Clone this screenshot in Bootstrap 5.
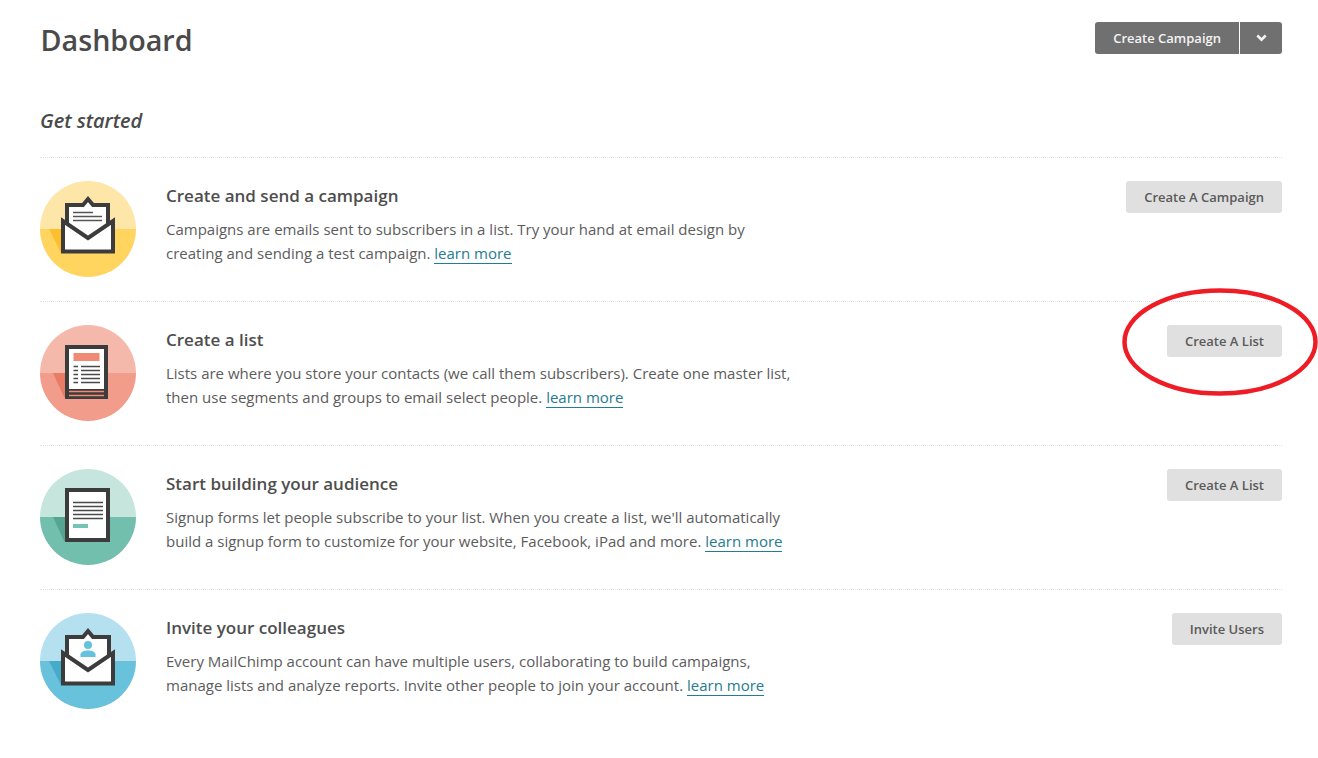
<!DOCTYPE html>
<html lang="en">
<head>
<meta charset="utf-8">
<title>Dashboard</title>
<link rel="stylesheet" href="https://cdn.jsdelivr.net/npm/bootstrap@5.3.0/dist/css/bootstrap.min.css">
<style>
body{font-family:"Open Sans",sans-serif;color:#555;background:#fff;font-size:15px;line-height:24px}
.page-wrap{padding:0 36px 0 40px;position:relative}
.top-bar{height:80px;padding-top:22px}
.page-title{font-size:28.7px;line-height:36px;font-weight:600;color:#4a4a4a;margin:0 0 0 .5px;letter-spacing:0}
.split-btn{height:32px}
.btn-dark-grey{background:#707070;color:#f4f4f4;font-size:13px;font-weight:600;line-height:32px;height:32px;padding:0 18px;border:0;border-radius:3px 0 0 3px}
.btn-caret{background:#707070;height:32px;width:43px;border:0;border-left:1px solid #fff;border-radius:0 3px 3px 0;padding:0}
.btn-caret svg{display:block;margin:0 auto}
.started{font-size:20px;font-weight:600;font-style:italic;color:#4a4a4a;line-height:28px;margin:0;padding-top:27px;height:77px;letter-spacing:-.05px}
.task-row{border-top:1px dotted #e2e2e2;height:144px;padding-top:23px}
.task-ico{width:96px;height:96px;flex:none;margin-right:30px}
.task-ico svg{display:block}
.task-text{width:630px;padding-top:3px}
.task-title{font-size:17px;font-weight:600;color:#4e4e4e;line-height:24px;margin:0 0 9px}
.task-desc{margin:0;color:#5c5c5c}
.task-desc a{color:#257b8f;text-decoration:none;border-bottom:1px solid #257b8f}
.btn-light-grey{background:#e0e0e0;color:#5a5a5a;font-size:13px;font-weight:600;height:32px;line-height:32px;padding:0 18px;border:0;border-radius:3px}
.red-ring{position:absolute;left:1122px;top:288px;pointer-events:none}
</style>
</head>
<body>
<div class="page-wrap">
  <div class="top-bar d-flex justify-content-between align-items-start">
    <h1 class="page-title">Dashboard</h1>
    <div class="split-btn d-flex">
      <button class="btn-dark-grey" type="button">Create Campaign</button>
      <button class="btn-caret" type="button" aria-label="More"><svg width="11" height="8" viewBox="0 0 11 8"><path d="M1.300 1.500 5.500 5.700 9.700 1.500" fill="none" stroke="#f4f4f4" stroke-width="2.500"/></svg></button>
    </div>
  </div>
  <h2 class="started">Get started</h2>

  <div class="task-row d-flex align-items-start">
    <div class="task-ico">
      <svg width="96" height="96" viewBox="0 0 96 96">
        <defs><clipPath id="c1"><circle cx="48" cy="48" r="48"/></clipPath></defs>
        <g clip-path="url(#c1)">
          <rect width="96" height="48" fill="#fee6a9"/><rect y="48" width="96" height="48" fill="#ffd45f"/>
          <path d="M9 48H24V72H21Z" fill="#fcc02f"/>
        </g>
        <path d="M27 44V24H43L48 18L53 24H68V44L48 57Z" fill="#fff"/>
        <path d="M27 44V24H43L48 18L53 24H68V44" fill="none" stroke="#3c3c3c" stroke-width="4"/>
        <path d="M33 31.500H53M33 35.500H62M33 39.500H62" stroke="#555" stroke-width="1.300"/>
        <path d="M23 40V70.500H73V40L48 57Z" fill="#fff" stroke="#3c3c3c" stroke-width="4"/>
      </svg>
    </div>
    <div class="task-text">
      <h3 class="task-title">Create and send a campaign</h3>
      <p class="task-desc">Campaigns are emails sent to subscribers in a list. Try your hand at email design by creating and sending a test campaign. <a href="#">learn more</a></p>
    </div>
    <button class="btn-light-grey ms-auto" type="button">Create A Campaign</button>
  </div>

  <div class="task-row d-flex align-items-start">
    <div class="task-ico">
      <svg width="96" height="96" viewBox="0 0 96 96">
        <defs><clipPath id="c2"><circle cx="48" cy="48" r="48"/></clipPath></defs>
        <g clip-path="url(#c2)">
          <rect width="96" height="48" fill="#f5b9ab"/><rect y="48" width="96" height="48" fill="#f29c8c"/>
          <path d="M13 48H27V72H24Z" fill="#e97c64"/>
        </g>
        <rect x="25" y="20" width="43" height="54" fill="#3c3c3c"/>
        <rect x="29" y="24" width="35" height="40" fill="#fff"/>
        <rect x="33.500" y="28" width="26" height="8" fill="#f08a75"/>
        <path d="M33.500 41.500H38M41 41.500H60M33.500 45.500H38M41 45.500H60M33.500 49.500H38M41 49.500H60M33.500 53.500H38M41 53.500H60M33.500 57.500H38M41 57.500H60" stroke="#4a4a4a" stroke-width="1.600"/>
        <path d="M29 66.500H64M29 70.500H64" stroke="#f08a75" stroke-width="1.500"/>
      </svg>
    </div>
    <div class="task-text">
      <h3 class="task-title">Create a list</h3>
      <p class="task-desc">Lists are where you store your contacts (we call them subscribers). Create one master list, then use segments and groups to email select people. <a href="#">learn more</a></p>
    </div>
    <button class="btn-light-grey ms-auto" type="button">Create A List</button>
  </div>

  <div class="task-row d-flex align-items-start">
    <div class="task-ico">
      <svg width="96" height="96" viewBox="0 0 96 96">
        <defs><clipPath id="c3"><circle cx="48" cy="48" r="48"/></clipPath></defs>
        <g clip-path="url(#c3)">
          <rect width="96" height="48" fill="#c6e5dd"/><rect y="48" width="96" height="48" fill="#73bfae"/>
          <path d="M13 48H27V72H24Z" fill="#55a591"/>
        </g>
        <rect x="27" y="21" width="41" height="50" fill="#fff" stroke="#3c3c3c" stroke-width="4"/>
        <path d="M33 33.500H63M33 37.500H63M33 41.500H63M33 45.500H63M33 49.500H63" stroke="#4a4a4a" stroke-width="1.600"/>
        <rect x="33" y="55" width="15" height="4" fill="#73c4b2"/>
      </svg>
    </div>
    <div class="task-text">
      <h3 class="task-title">Start building your audience</h3>
      <p class="task-desc">Signup forms let people subscribe to your list. When you create a list, we'll automatically build a signup form to customize for your website, Facebook, iPad and more. <a href="#">learn more</a></p>
    </div>
    <button class="btn-light-grey ms-auto" type="button">Create A List</button>
  </div>

  <div class="task-row d-flex align-items-start">
    <div class="task-ico">
      <svg width="96" height="96" viewBox="0 0 96 96">
        <defs><clipPath id="c4"><circle cx="48" cy="48" r="48"/></clipPath></defs>
        <g clip-path="url(#c4)">
          <rect width="96" height="48" fill="#b4e0ef"/><rect y="48" width="96" height="48" fill="#68c2dc"/>
          <path d="M9 48H24V72H21Z" fill="#45abc8"/>
        </g>
        <path d="M27 44V24H43L48 18L53 24H69V44L48 57Z" fill="#fff"/>
        <path d="M27 44V24H43L48 18L53 24H69V44" fill="none" stroke="#3c3c3c" stroke-width="4"/>
        <circle cx="48" cy="32" r="4" fill="#65c1dc"/>
        <path d="M40.500 44V41.500C40.500 39 44 37.500 48 37.500C52 37.500 55.500 39 55.500 41.500V44Z" fill="#65c1dc"/>
        <path d="M23 40V70.500H73V40L48 57Z" fill="#fff" stroke="#3c3c3c" stroke-width="4"/>
      </svg>
    </div>
    <div class="task-text">
      <h3 class="task-title">Invite your colleagues</h3>
      <p class="task-desc">Every MailChimp account can have multiple users, collaborating to build campaigns, manage lists and analyze reports. Invite other people to join your account. <a href="#">learn more</a></p>
    </div>
    <button class="btn-light-grey ms-auto" type="button">Invite Users</button>
  </div>

  <svg class="red-ring" width="196" height="108" viewBox="0 0 196 108"><ellipse cx="98" cy="54" rx="95.500" ry="51.500" fill="none" stroke="#ee1c25" stroke-width="4.500"/></svg>
</div>
<script src="https://cdn.jsdelivr.net/npm/bootstrap@5.3.0/dist/js/bootstrap.bundle.min.js"></script>
</body>
</html>
